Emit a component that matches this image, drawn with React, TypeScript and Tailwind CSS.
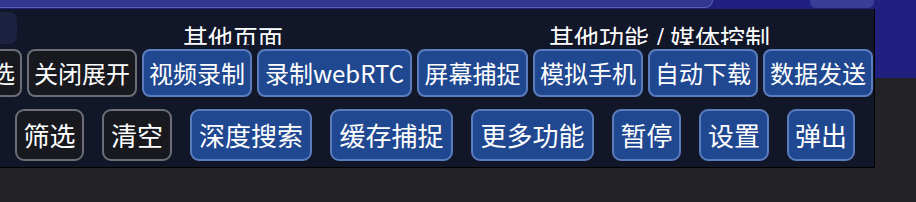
import React from 'react'

type Btn = {label: string, w: string, dark?: boolean}

const topRow: Btn[] = [
    {label: "高级筛选", w: "w-[110px]", dark: true},
    {label: "关闭展开", w: "w-[110px]", dark: true},
    {label: "视频录制", w: "w-[110px]"},
    {label: "录制webRTC", w: "w-[155px]"},
    {label: "屏幕捕捉", w: "w-[111px]"},
    {label: "模拟手机", w: "w-[110px]"},
    {label: "自动下载", w: "w-[110px]"},
    {label: "数据发送", w: "w-[110px]"},
]

const bottomRow: Btn[] = [
    {label: "筛选", w: "w-[69px]", dark: true},
    {label: "清空", w: "w-[70px]", dark: true},
    {label: "深度搜索", w: "w-[122px]"},
    {label: "缓存捕捉", w: "w-[123px]"},
    {label: "更多功能", w: "w-[123px]"},
    {label: "暂停", w: "w-[69px]"},
    {label: "设置", w: "w-[70px]"},
    {label: "弹出", w: "w-[68px]"},
]

const font = {fontFamily: '"Noto Sans CJK SC", "Noto Sans", sans-serif'}

function ToolButton({btn, big}: {btn: Btn, big?: boolean}) {
    const tone = btn.dark
        ? "bg-[#17191f] border-[#6b6e77]"
        : "bg-[#1f4891] border-[#5c7dbd]"
    const size = big
        ? "h-[52px] text-[26px] rounded-[9px]"
        : "h-[48px] text-[24px] rounded-[8px]"
    return (
        <button className={`${btn.w} ${size} ${tone} shrink-0 border-2 text-white flex items-center justify-center whitespace-nowrap leading-none`}>
            {btn.label}
        </button>
    )
}

export default function App() {
    return (
        <div className="w-[916px] h-[202px] overflow-hidden flex bg-[#232227]" style={font}>
            <div className="w-[875px] shrink-0 flex flex-col">
                {/* top bar peeking from above */}
                <div className="h-[9px] bg-[#1f2080] flex items-start">
                    <div className="w-[713px] h-[8px] bg-[#33378f] border-b border-r border-[#5d62b0] rounded-br-[12px]"/>
                    <div className="ml-[97px] w-[64px] h-[8px] bg-[#3b3e97] rounded-b-[6px]"/>
                </div>
                <div className="h-[159px] bg-[#111629] border-r border-b border-black flex flex-col">
                    <div className="h-[36px] overflow-hidden flex items-start text-white text-[25px] leading-[25px]">
                        <div className="w-[17px] h-[32px] mt-[3px] bg-[#1d2240] rounded-r-[8px] shrink-0"/>
                        <span className="ml-[166px] pt-[16px] whitespace-nowrap">其他页面</span>
                        <span className="ml-[266px] pt-[16px] whitespace-nowrap">其他功能 / 媒体控制</span>
                    </div>
                    <div className="mt-[4px] overflow-hidden">
                        <div className="flex gap-[5px] ml-[-88px]">
                            {topRow.map((b) => <ToolButton key={b.label} btn={b}/>)}
                        </div>
                    </div>
                    <div className="mt-[12px] flex gap-[18px] pl-[15px]">
                        {bottomRow.map((b) => <ToolButton key={b.label} btn={b} big/>)}
                    </div>
                </div>
                <div className="flex-1"/>
            </div>
            <div className="flex-1 flex flex-col">
                <div className="h-[78px] bg-[#1f2080]"/>
                <div className="flex-1"/>
            </div>
        </div>
    )
}
